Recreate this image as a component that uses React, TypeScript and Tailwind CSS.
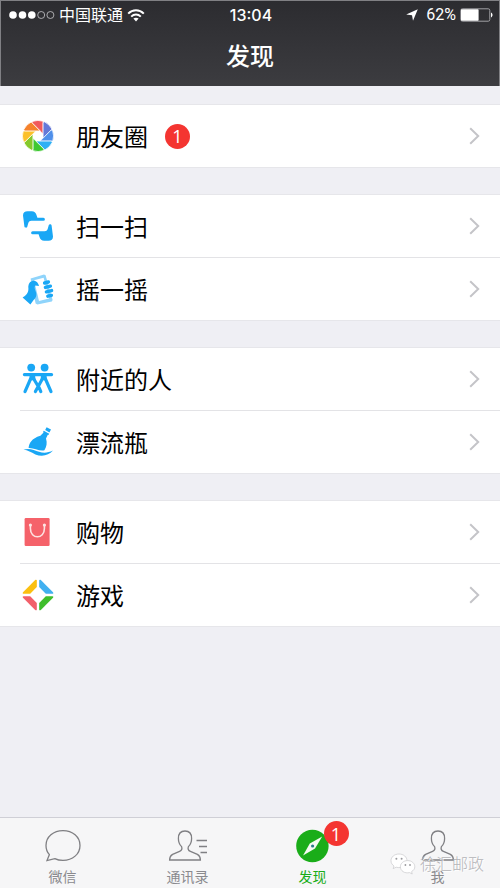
import type { ReactNode } from 'react';

type Row = { label: string; icon: ReactNode; badge?: number };
type Tab = { label: string; icon: ReactNode; badge?: number; active?: boolean };

const blades = [
  { color: '#f0595c', turn: 'rotate(0)' },
  { color: '#6478d8', turn: 'rotate(45)' },
  { color: '#4f8fea', turn: 'rotate(90)' },
  { color: '#2fb0f4', turn: 'rotate(135)' },
  { color: '#3ec832', turn: 'rotate(180)' },
  { color: '#86c92c', turn: 'rotate(225)' },
  { color: '#fbc02a', turn: 'rotate(270)' },
  { color: '#f5822c', turn: 'rotate(315)' },
];

function MomentsIcon() {
  return (
    <svg viewBox="-16 -16 32 32" className="size-8" aria-hidden="true">
      {blades.map((b) => (
        <path
          key={b.turn}
          d="M-5.4 -14.6A15.6 15.6 0 0 1 5.1 -14.7L5.1 -2.1 -6 -13.2Z"
          fill={b.color}
          stroke="#fff"
          strokeWidth="0.7"
          transform={b.turn}
        />
      ))}
    </svg>
  );
}

function ScanIcon() {
  const hand =
    'M-15 -10.5C-15 -13.6 -13.2 -14.8 -10.5 -14.8H-6.2C-3.6 -14.8 -2.4 -13.4 -1.6 -11.2L-.6 -8.2H5.4A1.5 1.5 0 0 1 5.4 -5.2H-6.5C-8.6 -5.2 -9.4 -4.2 -9.9 -2.2L-10.8 1C-11.2 2.2 -13.4 2 -13.6 .6Z';
  return (
    <svg viewBox="-16 -16 32 32" className="size-8" fill="#1aa7f5" aria-hidden="true">
      <path d={hand} />
      <path d={hand} transform="rotate(180)" />
    </svg>
  );
}

function ShakeIcon() {
  return (
    <svg viewBox="0 0 32 32" className="size-8" aria-hidden="true">
      <path
        d="M8.6 5.4 22 1.4 23.6 2.2 30.6 27 29.8 28.6 15.4 31.4 13.6 30.4Z"
        fill="#8fd4fb"
      />
      <path d="M12 7.2 21.6 4.8 27 25.6 17 28Z" fill="#fff" />
      <path
        d="M6.4 15.5C6 11 8 8 11.4 7.8C14.4 7.6 16.4 10.2 17 13L13.4 12.6C12.2 14 12.6 15.4 13.4 17.4C15 21.6 14.8 23.6 11.6 27L8.4 31.4 .6 24.6C3.8 22.6 6.7 20 6.4 15.5Z"
        fill="#1aa7f5"
      />
      <path
        d="M22.6 10 26.4 9M23.4 14.4 28.4 13.2M24.4 18.8 29.6 17.6M25.8 23.2 29.4 22.4"
        stroke="#1aa7f5"
        strokeWidth="3.4"
        strokeLinecap="round"
      />
    </svg>
  );
}

function NearbyIcon() {
  return (
    <svg viewBox="0 0 32 32" className="size-8" aria-hidden="true">
      <circle cx="9.2" cy="4.6" r="3.9" fill="#1aa7f5" />
      <circle cx="22.6" cy="4.6" r="3.9" fill="#1aa7f5" />
      <path
        d="M2.4 11.6H29.6M9.4 14 3 28.6M10.6 14 16 23M21.4 14 13.4 28.6M22.6 14 29 28.6M16 22 18.8 28.6"
        fill="none"
        stroke="#1aa7f5"
        strokeWidth="3.2"
        strokeLinecap="round"
      />
      <path d="M7.4 12H13L13.6 17 8.4 17.6ZM19 12H24.6L24.4 17.6 18.6 17Z" fill="#1aa7f5" />
    </svg>
  );
}

function BottleIcon() {
  return (
    <svg viewBox="0 0 32 32" className="size-8" fill="#1aa7f5" aria-hidden="true">
      <path d="M24.6 1.2 29 3.6 27.4 6.4 23.2 4Z" />
      <path d="M21.8 4.8 27.2 7.8 26.4 9 25.8 8.8 24 12.6C25.4 17 24.6 21 22.4 24.2C18 25.6 11.6 21.6 6.6 22C7 17.6 9.4 12.4 18.4 9.8L21.6 6.4 21 6Z" />
      <path d="M1.4 23.6C8 21.8 12.4 24.4 17 25.8C21.6 27.2 26 27 31 24.6C26.8 29.6 19.8 31 13.4 28.4C9 26.4 6 24.4 1.4 23.6Z" />
    </svg>
  );
}

function ShoppingIcon() {
  return (
    <svg viewBox="0 0 32 32" className="size-8" aria-hidden="true">
      <rect x="2.6" y="2" width="25" height="28" rx="1.2" fill="#f5626a" />
      <path
        d="M8.4 9V12.4C8.4 23.6 22.4 23.6 22.4 12.4V9"
        fill="none"
        stroke="#fde3e2"
        strokeWidth="1.6"
      />
      <circle cx="8.4" cy="9" r="1.6" fill="#fde3e2" />
      <circle cx="22.4" cy="9" r="1.6" fill="#fde3e2" />
    </svg>
  );
}

function GamesIcon() {
  return (
    <svg viewBox="-16 -16 32 32" className="size-8" aria-hidden="true">
      <path d="M-1.2 -14.4V-8L-7.8 -1.2H-14.4C-15.6 -1.2 -15.4 -2.2 -15 -2.8L-2.8 -15C-2 -15.6 -1.2 -15.4 -1.2 -14.4Z" fill="#fbc010" />
      <path d="M1.2 -14.4V-8L7.8 -1.2H14.4C15.6 -1.2 15.4 -2.2 15 -2.8L2.8 -15C2 -15.6 1.2 -15.4 1.2 -14.4Z" fill="#41b0f0" />
      <path d="M-1.2 14.4V8L-7.8 1.2H-14.4C-15.6 1.2 -15.4 2.2 -15 2.8L-2.8 15C-2 15.6 -1.2 15.4 -1.2 14.4Z" fill="#f2606a" />
      <path d="M1.2 14.4V8L7.8 1.2H14.4C15.6 1.2 15.4 2.2 15 2.8L2.8 15C2 15.6 1.2 15.4 1.2 14.4Z" fill="#3fbe2c" />
    </svg>
  );
}

const personPath =
  'M18 2C13.6 2 11.4 5 11.4 9.4C11.4 13 12.6 15.6 14.6 17.6C15.4 19.8 14.8 21.4 12.6 22.4L5.6 25.4C3.4 26.6 2.6 28 2.6 31H33.4C33.4 28 32.6 26.6 30.4 25.4L23.4 22.4C21.2 21.4 20.6 19.8 21.4 17.6C23.4 15.6 24.6 13 24.6 9.4C24.6 5 22.4 2 18 2Z';

function ChatsIcon() {
  return (
    <svg viewBox="0 0 36 34" className="h-[34px] w-9" fill="none" stroke="#808084" strokeWidth="1.3" aria-hidden="true">
      <path d="M18 1.6C27.6 1.6 35 8 35 16.4C35 25 27.6 31.4 18 31.4C15 31.4 12.2 30.8 9.8 29.6L2 31.6 4.4 25.6C2 23 1 20 1 16.4C1 8 8.4 1.6 18 1.6Z" />
    </svg>
  );
}

function ContactsIcon() {
  return (
    <svg viewBox="0 0 40 34" className="h-[34px] w-10" fill="none" stroke="#808084" strokeWidth="1.3" aria-hidden="true">
      <path d={personPath} transform="translate(-1)" />
      <path d="M28.5 11.5H39M31 17.5H39M32.5 23.5H39" strokeWidth="1.6" />
    </svg>
  );
}

function CompassIcon() {
  return (
    <svg viewBox="0 0 34 34" className="size-[34px]" aria-hidden="true">
      <circle cx="16.4" cy="17" r="16.2" fill="#1aad19" />
      <path d="M26.2 7.6 19 19.4 7 26.4 13.8 14.6Z" fill="#f4faf2" />
      <circle cx="16.6" cy="17" r="1.6" fill="#2c7c8c" />
    </svg>
  );
}

function MeIcon() {
  return (
    <svg viewBox="0 0 36 34" className="h-[34px] w-9" fill="none" stroke="#808084" strokeWidth="1.3" aria-hidden="true">
      <path d={personPath} />
    </svg>
  );
}

const groups: Row[][] = [
  [{ label: '朋友圈', icon: <MomentsIcon />, badge: 1 }],
  [
    { label: '扫一扫', icon: <ScanIcon /> },
    { label: '摇一摇', icon: <ShakeIcon /> },
  ],
  [
    { label: '附近的人', icon: <NearbyIcon /> },
    { label: '漂流瓶', icon: <BottleIcon /> },
  ],
  [
    { label: '购物', icon: <ShoppingIcon /> },
    { label: '游戏', icon: <GamesIcon /> },
  ],
];

const tabs: Tab[] = [
  { label: '微信', icon: <ChatsIcon /> },
  { label: '通讯录', icon: <ContactsIcon /> },
  { label: '发现', icon: <CompassIcon />, badge: 1, active: true },
  { label: '我', icon: <MeIcon /> },
];

function Badge({ count }: { count: number }) {
  return (
    <span className="flex size-[25px] items-center justify-center rounded-full bg-[#f43531] font-['Open_Sans',sans-serif] text-lg leading-6 text-white">
      {count}
    </span>
  );
}

function StatusBar() {
  return (
    <div className="grid h-7 grid-cols-[1fr_auto_1fr] items-center pr-1.5 pl-2 text-base">
      <div className="flex items-center gap-1">
        <svg viewBox="0 0 46 10" className="h-[10px] w-[46px]" aria-hidden="true">
          <g fill="#fff">
            <circle cx="4" cy="5" r="3.8" />
            <circle cx="13.5" cy="5" r="3.8" />
            <circle cx="22.8" cy="5" r="3.8" />
          </g>
          <g fill="none" stroke="#c8c8cc" strokeWidth="0.8">
            <circle cx="32.2" cy="5" r="3.5" />
            <circle cx="41.4" cy="5" r="3.5" />
          </g>
        </svg>
        <span>中国联通</span>
        <svg viewBox="0 0 18 14" className="h-[14px] w-[18px]" fill="none" stroke="#fff" strokeWidth="2" aria-hidden="true">
          <path d="M1.2 5.6C5.6 1 12.4 1 16.8 5.6" />
          <path d="M4.2 8.6C7 5.8 11 5.8 13.8 8.6" />
          <path d="M9 13.4 6.4 10.6C7.9 9.3 10.1 9.3 11.6 10.6Z" fill="#fff" stroke="none" />
        </svg>
      </div>
      <time className="font-medium">13:04</time>
      <div className="flex items-center justify-end gap-1">
        <svg viewBox="0 0 12 12" className="mr-1 size-3" fill="#fff" aria-hidden="true">
          <path d="M11.8 .2 7 11.8 6 6.2.2 5.4Z" />
        </svg>
        <span className="font-['Roboto',sans-serif]">62%</span>
        <svg viewBox="0 0 33 14" className="h-[14px] w-[33px]" aria-hidden="true">
          <rect x="0.8" y="0.8" width="29" height="12.4" rx="1.6" fill="none" stroke="#a0a0a4" />
          <rect x="1" y="1.2" width="17.6" height="11.6" rx="0.8" fill="#fff" />
          <path d="M31 4.6C33 5.4 33 8.6 31 9.4Z" fill="#fff" />
        </svg>
      </div>
    </div>
  );
}

function ListRow({ row, first }: { row: Row; first: boolean }) {
  return (
    <li>
      {!first && <div className="ml-5 h-px bg-[#e3e3e6]" />}
      <button type="button" className="flex h-[62px] w-full items-center pr-5 pl-[22px] text-left">
        {row.icon}
        <span className="ml-[22px] pt-1 text-2xl">{row.label}</span>
        {row.badge && (
          <span className="ml-[17px]">
            <Badge count={row.badge} />
          </span>
        )}
        <svg viewBox="0 0 11 18" className="ml-auto h-[18px] w-[11px]" fill="none" stroke="#c4c4c8" strokeWidth="2" aria-hidden="true">
          <path d="M1.2 1.2 9.2 9 1.2 16.8" />
        </svg>
      </button>
    </li>
  );
}

function TabItem({ tab }: { tab: Tab }) {
  return (
    <button
      type="button"
      className={`flex flex-1 flex-col items-center pt-[11px] ${tab.active ? 'text-[#1aad19]' : 'text-[#8a8a8e]'}`}
    >
      <span className="relative">
        {tab.icon}
        {tab.badge && (
          <span className="absolute -top-2 left-7">
            <Badge count={tab.badge} />
          </span>
        )}
      </span>
      <span className="mt-1 text-sm">{tab.label}</span>
    </button>
  );
}

function Watermark() {
  return (
    <div className="pointer-events-none absolute right-4 bottom-3 flex items-center gap-1">
      <svg viewBox="0 0 26 22" className="h-[22px] w-[26px]" fill="#fff" stroke="#c9c9cc" strokeWidth="0.7" aria-hidden="true">
        <path d="M9 1C4.4 1 1 4 1 7.8C1 10 2.2 11.8 4 13L3.2 15.6 6.2 14.2C11.8 15.8 17 12.6 17 7.8C17 4 13.6 1 9 1Z" />
        <path d="M17.6 7.6C13.4 7.6 10.4 10.4 10.4 13.8C10.4 17.8 14.6 20.8 19.6 19.6L22.2 21 21.6 18.6C23.6 17.4 24.8 15.8 24.8 13.8C24.8 10.4 21.8 7.6 17.6 7.6Z" />
        <g fill="#9a9a9e" stroke="none">
          <circle cx="6.4" cy="5.8" r="1" />
          <circle cx="11.6" cy="5.8" r="1" />
          <circle cx="15.4" cy="12" r="0.9" />
          <circle cx="20" cy="12" r="0.9" />
        </g>
      </svg>
      <span className="text-base leading-6 font-light text-[#b4b4b8] text-shadow-[1px_1px_0_#fff]">徐汇邮政</span>
    </div>
  );
}

export default function App() {
  return (
    <div className="flex min-h-screen flex-col bg-[#efeff4] font-['Inter','Noto_Sans_CJK_SC',sans-serif] text-black">
      <header className="h-[86px] border-x border-t border-[#808084] bg-linear-to-b from-[#2c2c30] to-[#3c3c40] text-white">
        <StatusBar />
        <h1 className="pt-3 text-center text-2xl font-medium">发现</h1>
      </header>

      <main className="flex flex-1 flex-col gap-7 pt-[19px]">
        {groups.map((rows) => (
          <ul key={rows[0].label} className="bg-white outline outline-[#e6e6ea]">
            {rows.map((row, i) => (
              <ListRow key={row.label} row={row} first={i === 0} />
            ))}
          </ul>
        ))}
      </main>

      <nav className="relative flex h-[71px] overflow-hidden border-t border-[#cfcfd6] bg-[#f6f6f7]">
        {tabs.map((tab) => (
          <TabItem key={tab.label} tab={tab} />
        ))}
        <Watermark />
      </nav>
    </div>
  );
}
